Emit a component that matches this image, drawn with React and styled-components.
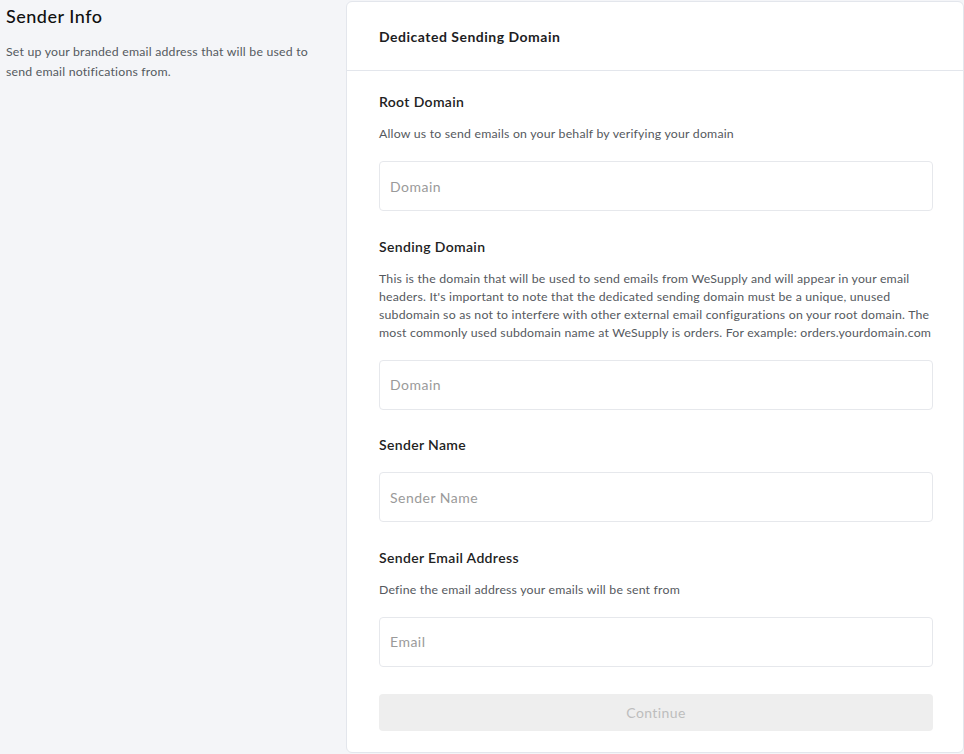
import React from 'react';
import styled, { createGlobalStyle } from 'styled-components';

const GlobalStyle = createGlobalStyle`
  html, body {
    margin: 0;
    padding: 0;
    background: #f4f5f8;
    font-family: 'Lato', 'Open Sans', sans-serif;
  }
  * {
    box-sizing: border-box;
  }
`;

const Page = styled.div`
  display: flex;
  width: 964px;
  min-height: 754px;
  padding-top: 1px;
`;

const Aside = styled.div`
  width: 346px;
  flex-shrink: 0;
  padding: 3px 30px 0 6px;

  h2 {
    margin: 0;
    font-size: 18px;
    line-height: 24px;
    font-weight: 500;
    letter-spacing: 0.5px;
    color: #111;
  }

  p {
    margin: 14px 0 0;
    font-size: 12.3px;
    line-height: 20px;
    letter-spacing: 0.2px;
    color: #555a60;
  }
`;

const Card = styled.div`
  flex: 1;
  height: 752px;
  background: #fff;
  border: 1px solid #e3e6ec;
  border-radius: 6px;
  display: flex;
  flex-direction: column;
  overflow: hidden;
`;

const CardHeader = styled.div`
  flex-shrink: 0;
  height: 69px;
  display: flex;
  align-items: center;
  padding: 0 32px;
  border-bottom: 1px solid #e3e6ec;
  font-size: 14px;
  font-weight: 700;
  letter-spacing: 0.5px;
  color: #1d1d1f;
`;

const CardBody = styled.div`
  padding: 21px 30px 21px 32px;
  display: flex;
  flex-direction: column;
  gap: 25.5px;
`;

const Field = styled.div`
  display: flex;
  flex-direction: column;
`;

const Label = styled.div`
  font-size: 14px;
  line-height: 20px;
  font-weight: 600;
  letter-spacing: 0.35px;
  color: #222;
  margin-bottom: ${(p) => (p.$tight ? '13px' : '17px')};
`;

const Desc = styled.div`
  font-size: 12.3px;
  line-height: 18px;
  letter-spacing: 0.2px;
  color: #55595e;
  margin-bottom: 18px;
`;

const Input = styled.input`
  flex-shrink: 0;
  height: 50px;
  width: 100%;
  border: 1px solid #e6e8ec;
  border-radius: 4px;
  padding: 0 10px;
  font-family: inherit;
  font-size: 14px;
  letter-spacing: 0.5px;
  color: #333;
  outline: none;

  &::placeholder {
    color: #9a9a9a;
  }
`;

const Button = styled.button`
  flex-shrink: 0;
  margin-top: 2px;
  height: 37px;
  width: 100%;
  border: none;
  border-radius: 4px;
  background: #eeeeee;
  color: #bdbdbd;
  font-family: inherit;
  font-size: 14px;
  letter-spacing: 0.4px;
  cursor: not-allowed;
`;

const fields = [
  {
    label: 'Root Domain',
    desc: 'Allow us to send emails on your behalf by verifying your domain',
    placeholder: 'Domain',
  },
  {
    label: 'Sending Domain',
    desc: "This is the domain that will be used to send emails from WeSupply and will appear in your email headers. It's important to note that the dedicated sending domain must be a unique, unused subdomain so as not to interfere with other external email configurations on your root domain. The most commonly used subdomain name at WeSupply is orders. For example: orders.yourdomain.com",
    placeholder: 'Domain',
  },
  { label: 'Sender Name', placeholder: 'Sender Name' },
  {
    label: 'Sender Email Address',
    desc: 'Define the email address your emails will be sent from',
    placeholder: 'Email',
  },
];

const App = () => {
  return (
    <>
      <GlobalStyle />
      <Page>
        <Aside>
          <h2>Sender Info</h2>
          <p>Set up your branded email address that will be used to send email notifications from.</p>
        </Aside>
        <Card>
          <CardHeader>Dedicated Sending Domain</CardHeader>
          <CardBody>
            {fields.map((f) => (
              <Field key={f.label}>
                <Label $tight={!!f.desc}>{f.label}</Label>
                {f.desc && <Desc>{f.desc}</Desc>}
                <Input placeholder={f.placeholder} />
              </Field>
            ))}
            <Button disabled>Continue</Button>
          </CardBody>
        </Card>
      </Page>
    </>
  );
};

export default App;
